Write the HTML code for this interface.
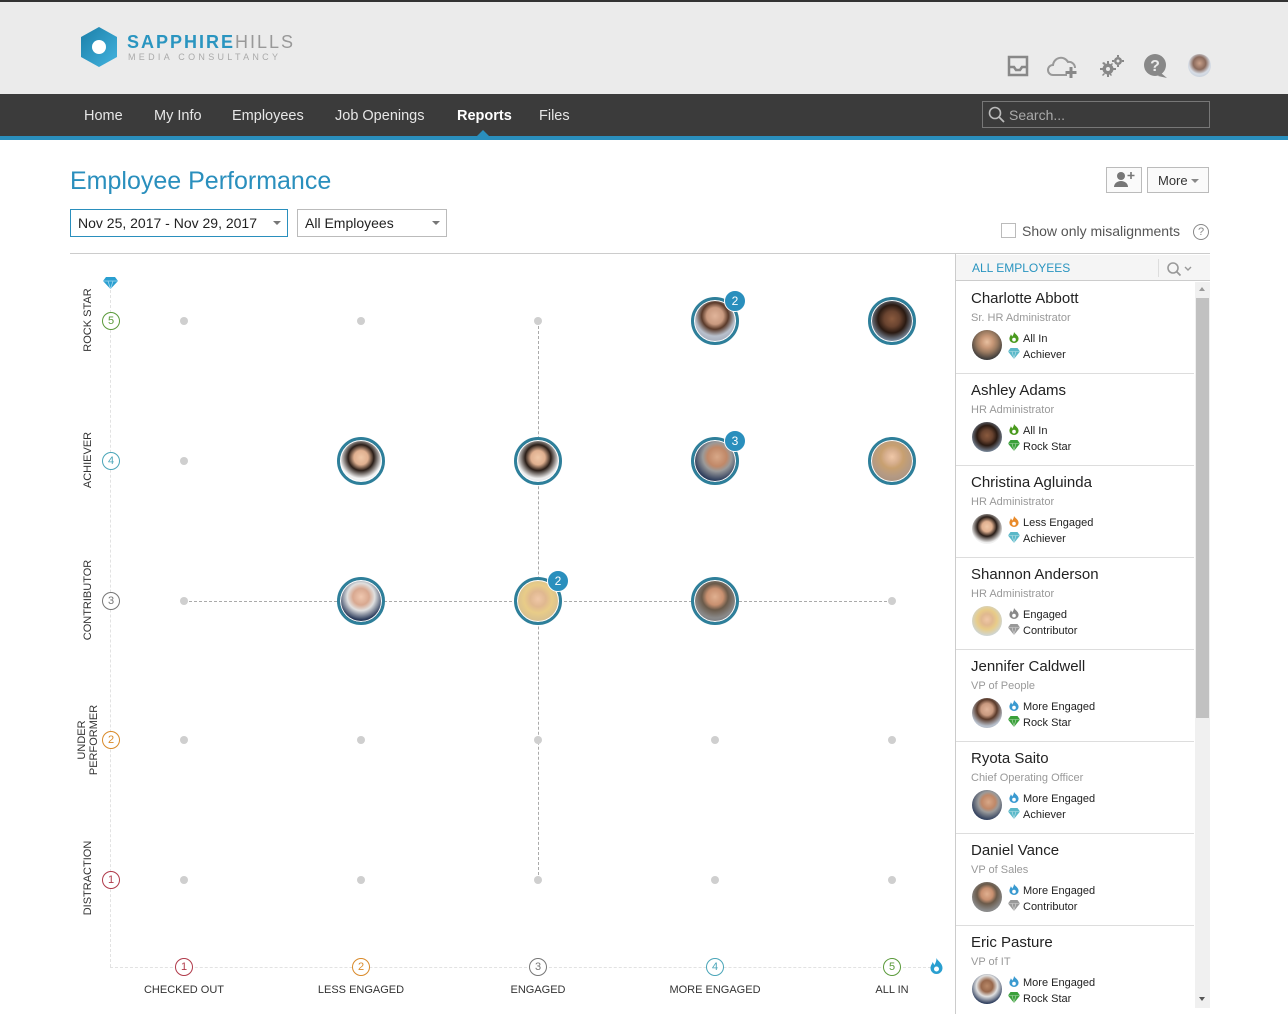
<!DOCTYPE html>
<html><head><meta charset="utf-8">
<style>
*{box-sizing:border-box;margin:0;padding:0}
body{width:1288px;height:1029px;overflow:hidden;background:#fff;font-family:"Liberation Sans",sans-serif;position:relative;color:#333}
.abs{position:absolute}
#top{left:0;top:0;width:1288px;height:94px;background:#ebebeb;border-top:2px solid #333}
#nav{left:0;top:94px;width:1288px;height:42px;background:#3b3b3b}
#stripe{left:0;top:136px;width:1288px;height:4px;background:#2a8fbd}
.nv{top:108px;color:#e6e6e6;font-size:14.5px}
.av{position:absolute;width:48px;height:48px;border-radius:50%;border:3px solid #2e7f9a;box-shadow:0 0 0 1px #fff inset}
.badge{position:absolute;width:22px;height:22px;border-radius:50%;background:#2a8fbd;color:#fff;font-size:12px;text-align:center;line-height:20px;border:1px solid #fff}
.dot{position:absolute;width:8px;height:8px;border-radius:50%;background:#cfcfcf}
.yc,.xc{position:absolute;width:18px;height:18px;border-radius:50%;border:1px solid;font-size:11px;text-align:center;line-height:16px;background:#fff}
.yl{position:absolute;font-size:11px;color:#333;transform:rotate(-90deg);transform-origin:center;white-space:nowrap;text-align:center;width:120px;line-height:12px}
.xl{position:absolute;font-size:11px;color:#333;width:160px;text-align:center;top:984px}
.it{position:absolute;left:956px;width:238px;height:92px;border-bottom:1px solid #ddd}
.it .n{position:absolute;left:15px;top:8px;font-size:15px;color:#222}
.it .t{position:absolute;left:15px;top:30px;font-size:11px;color:#999}
.it .p{position:absolute;left:16px;top:48px;width:30px;height:30px;border-radius:50%}
.it .a{position:absolute;left:52px;top:49px;font-size:11px;color:#222;line-height:16px}
.ic{display:inline-block;width:12px;height:11px;vertical-align:-1px;margin-right:3px}
</style></head><body>
<div id="top" class="abs"></div>
<svg class="abs" style="left:78px;top:26px" width="42" height="42" viewBox="0 0 42 42"><defs><linearGradient id="lg" x1="0" y1="0" x2="1" y2="1"><stop offset="0" stop-color="#1b7fa8"/><stop offset="1" stop-color="#43b3df"/></linearGradient></defs><polygon points="21,1 39,11 39,31 21,41 3,31 3,11" fill="url(#lg)"/><circle cx="21" cy="21" r="7" fill="#fff"/></svg>
<div class="abs" style="left:127px;top:32px;font-size:18px;letter-spacing:2px;font-weight:bold;color:#2a95c0">SAPPHIRE<span style="font-weight:normal;color:#999">HILLS</span></div>
<div class="abs" style="left:128px;top:52px;font-size:9px;letter-spacing:3.3px;color:#aaa">MEDIA CONSULTANCY</div>
<svg class="abs" style="left:1006px;top:55px" width="24" height="22" viewBox="0 0 24 22"><path d="M3 2h18v18H3z M3 12h5l2 3h4l2-3h5" fill="none" stroke="#888" stroke-width="2.5"/></svg>
<svg class="abs" style="left:1047px;top:53px" width="36" height="26" viewBox="0 0 36 26"><path d="M8 22H6a5 5 0 010-10 8 8 0 0115-3 6 6 0 017 6" fill="none" stroke="#999" stroke-width="2"/><path d="M24 14v11M18.5 19.5h11" stroke="#888" stroke-width="3"/><path d="M8 22h12" stroke="#999" stroke-width="2"/></svg>
<svg class="abs" style="left:1100px;top:54px" width="26" height="24" viewBox="0 0 26 24"><g fill="#888"><circle cx="8" cy="15" r="5.5"/><path d="M7 7h2v3H7zM7 20h2v3H7zM0 14h3v2H0zM13 14h3v2h-3zM2 9l2-1 2 2-2 1zM12 21l-1 1-2-2 1-1zM2 21l2-2 1 1-2 2zM12 9l1 1-2 2-1-1z"/><circle cx="18" cy="7" r="4"/><path d="M17 1h2v2h-2zM17 11h2v2h-2zM12 6h2v2h-2zM22 6h2v2h-2z"/></g><circle cx="8" cy="15" r="2" fill="#ebebeb"/><circle cx="18" cy="7" r="1.5" fill="#ebebeb"/></svg>
<svg class="abs" style="left:1143px;top:53px" width="26" height="26" viewBox="0 0 26 26"><circle cx="12" cy="12" r="11" fill="#888"/><path d="M18 20l6 5-9-2z" fill="#888"/><text x="12" y="18" font-size="16" font-weight="bold" fill="#ebebeb" text-anchor="middle" font-family="Liberation Sans">?</text></svg>
<div class="abs" style="left:1188px;top:54px;width:23px;height:23px;border-radius:50%;background:radial-gradient(circle at 50% 40%,#c9a08a 0,#8a6a5c 35%,#d7dde6 60%,#b8c4d0 100%)"></div>
<div id="nav" class="abs"></div>
<div id="stripe" class="abs"></div>
<div class="abs" style="left:477px;top:130px;width:0;height:0;border-left:6px solid transparent;border-right:6px solid transparent;border-bottom:6px solid #2a8fbd"></div>
<div class="abs nv" style="left:84px">Home</div>
<div class="abs nv" style="left:154px">My Info</div>
<div class="abs nv" style="left:232px">Employees</div>
<div class="abs nv" style="left:335px">Job Openings</div>
<div class="abs nv" style="left:457px;font-weight:bold;color:#fff">Reports</div>
<div class="abs nv" style="left:539px">Files</div>
<div class="abs" style="left:982px;top:101px;width:228px;height:27px;border:1px solid #777;background:#3b3b3b"></div>
<svg class="abs" style="left:988px;top:106px" width="18" height="18" viewBox="0 0 18 18"><circle cx="7" cy="7" r="5.5" fill="none" stroke="#bbb" stroke-width="1.6"/><path d="M11 11l5 5" stroke="#bbb" stroke-width="1.8"/></svg>
<div class="abs" style="left:1009px;top:107px;font-size:14px;color:#aaa">Search...</div>

<div class="abs" style="left:70px;top:167px;font-size:25px;color:#2a8fbd">Employee Performance</div>
<div class="abs" style="left:70px;top:209px;width:218px;height:28px;border:1px solid #2a8fbd;font-size:14px;padding:5px 7px;color:#222">Nov 25, 2017 - Nov 29, 2017</div>
<div class="abs" style="left:273px;top:221px;border-left:4px solid transparent;border-right:4px solid transparent;border-top:4px solid #777"></div>
<div class="abs" style="left:297px;top:209px;width:150px;height:28px;border:1px solid #bbb;font-size:14px;padding:5px 7px;color:#222">All Employees</div>
<div class="abs" style="left:432px;top:221px;border-left:4px solid transparent;border-right:4px solid transparent;border-top:4px solid #777"></div>

<div class="abs" style="left:1106px;top:167px;width:36px;height:26px;border:1px solid #bbb;background:#fafafa"></div>
<svg class="abs" style="left:1113px;top:170px" width="24" height="20" viewBox="0 0 24 20"><circle cx="8" cy="6" r="4" fill="#777"/><path d="M1 17a7 6 0 0114 0z" fill="#777"/><path d="M18 2v7M14.5 5.5h7" stroke="#777" stroke-width="1.6"/></svg>
<div class="abs" style="left:1147px;top:167px;width:62px;height:26px;border:1px solid #bbb;background:#fafafa;font-size:13px;padding:5px 10px;color:#333">More</div>
<div class="abs" style="left:1191px;top:179px;border-left:4px solid transparent;border-right:4px solid transparent;border-top:4px solid #888"></div>
<div class="abs" style="left:1001px;top:223px;width:15px;height:15px;border:1px solid #bbb;background:#fff"></div>
<div class="abs" style="left:1022px;top:223px;font-size:14px;color:#555">Show only misalignments</div>
<div class="abs" style="left:1193px;top:224px;width:16px;height:16px;border:1.4px solid #888;border-radius:50%;font-size:11px;text-align:center;line-height:14px;color:#888">?</div>

<div class="abs" style="left:70px;top:253px;width:1140px;height:1px;background:#ccc"></div>
<div class="abs" style="left:955px;top:254px;width:1px;height:760px;background:#ccc"></div>
<div class="abs" style="left:110px;top:290px;width:0;height:677px;border-left:1px dashed #e2e2e2"></div>
<div class="abs" style="left:110px;top:967px;width:826px;height:0;border-top:1px dashed #e2e2e2"></div>
<div class="abs" style="left:538px;top:321px;width:0;height:559px;border-left:1px dashed #aaa"></div>
<div class="abs" style="left:184px;top:601px;width:708px;height:0;border-top:1px dashed #aaa"></div>
<svg class="abs" style="left:103px;top:277px" width="15" height="12" viewBox="0 0 15 12"><path d="M3 0h9l3 4-7.5 8L0 4z" fill="#2a9fd0"/><path d="M0 4h15M5 4l2.5 8 2.5-8" stroke="#9fd6ee" stroke-width=".8" fill="none"/></svg>
<svg class="abs" style="left:929px;top:958px" width="15" height="16" viewBox="0 0 15 16"><path d="M7.5 0c1 3 6 5 6 10a6 6 0 01-12 0c0-3 2-4 2-6 1 1 1 2 2 3 1-2 2-4 2-7z" fill="#2a9fd0"/><circle cx="7.5" cy="11" r="2.5" fill="#fff"/></svg>

<div class="yc" style="left:102px;top:312px;border-color:#5a9a3a;color:#5a9a3a">5</div>
<div class="yc" style="left:102px;top:452px;border-color:#4aa5b8;color:#4aa5b8">4</div>
<div class="yc" style="left:102px;top:592px;border-color:#777;color:#777">3</div>
<div class="yc" style="left:102px;top:731px;border-color:#d98a2a;color:#d98a2a">2</div>
<div class="yc" style="left:102px;top:871px;border-color:#b03a4a;color:#b03a4a">1</div>
<div class="yl" style="left:28px;top:314px">ROCK STAR</div>
<div class="yl" style="left:28px;top:454px">ACHIEVER</div>
<div class="yl" style="left:28px;top:594px">CONTRIBUTOR</div>
<div class="yl" style="left:28px;top:728px">UNDER<br>PERFORMER</div>
<div class="yl" style="left:28px;top:872px">DISTRACTION</div>
<div class="xc" style="left:175px;top:958px;border-color:#b03a4a;color:#b03a4a">1</div>
<div class="xc" style="left:352px;top:958px;border-color:#d98a2a;color:#d98a2a">2</div>
<div class="xc" style="left:529px;top:958px;border-color:#777;color:#777">3</div>
<div class="xc" style="left:706px;top:958px;border-color:#4aa5b8;color:#4aa5b8">4</div>
<div class="xc" style="left:883px;top:958px;border-color:#5a9a3a;color:#5a9a3a">5</div>
<div class="xl" style="left:104px">CHECKED OUT</div>
<div class="xl" style="left:281px">LESS ENGAGED</div>
<div class="xl" style="left:458px">ENGAGED</div>
<div class="xl" style="left:635px">MORE ENGAGED</div>
<div class="xl" style="left:812px">ALL IN</div>

<div class="dot" style="left:180px;top:317px"></div><div class="dot" style="left:357px;top:317px"></div><div class="dot" style="left:534px;top:317px"></div>
<div class="dot" style="left:180px;top:457px"></div>
<div class="dot" style="left:180px;top:597px"></div><div class="dot" style="left:888px;top:597px"></div>
<div class="dot" style="left:180px;top:736px"></div><div class="dot" style="left:357px;top:736px"></div><div class="dot" style="left:534px;top:736px"></div><div class="dot" style="left:711px;top:736px"></div><div class="dot" style="left:888px;top:736px"></div>
<div class="dot" style="left:180px;top:876px"></div><div class="dot" style="left:357px;top:876px"></div><div class="dot" style="left:534px;top:876px"></div><div class="dot" style="left:711px;top:876px"></div><div class="dot" style="left:888px;top:876px"></div>

<div class="av" style="left:691px;top:297px;background:radial-gradient(circle at 50% 38%,#e0b49a 0,#c99a80 25%,#5a3a2a 40%,#b8c0cc 60%,#8c95a8 100%)"></div><div class="badge" style="left:724px;top:290px">2</div>
<div class="av" style="left:868px;top:297px;background:radial-gradient(circle at 50% 45%,#8a5a3e 0,#6a4430 25%,#2a1a12 45%,#8aa0b8 75%,#6a7a90 100%)"></div>
<div class="av" style="left:337px;top:437px;background:radial-gradient(circle at 50% 42%,#f0c8a8 0,#e0b090 22%,#2a1e18 40%,#f4f4f4 65%,#ddd 100%)"></div>
<div class="av" style="left:514px;top:437px;background:radial-gradient(circle at 50% 42%,#f0c8a8 0,#e0b090 22%,#2a1e18 40%,#f0f0f0 65%,#ccd 100%)"></div>
<div class="av" style="left:691px;top:437px;background:radial-gradient(circle at 55% 40%,#d8a888 0,#c08868 28%,#9a9a9a 42%,#2a3a5a 70%,#1a2030 100%)"></div><div class="badge" style="left:724px;top:430px">3</div>
<div class="av" style="left:868px;top:437px;background:radial-gradient(circle at 50% 40%,#f0c8a8 0,#d8b090 20%,#c8a070 35%,#b49a84 60%,#a08878 100%)"></div>
<div class="av" style="left:337px;top:577px;background:radial-gradient(circle at 50% 40%,#f0c8b0 0,#d8a890 25%,#e0e0e0 42%,#2a3a5a 70%,#1a2a48 100%)"></div>
<div class="av" style="left:514px;top:577px;background:radial-gradient(circle at 50% 45%,#f0c8a8 0,#e0b890 25%,#e8cc88 45%,#d8c090 70%,#c8d8e8 100%)"></div><div class="badge" style="left:547px;top:570px">2</div>
<div class="av" style="left:691px;top:577px;background:radial-gradient(circle at 50% 40%,#e0b090 0,#c89070 25%,#6a5a4a 40%,#8a8a8a 65%,#5a6070 100%)"></div>

<div class="abs" style="left:956px;top:255px;width:254px;height:26px;background:#f5f5f5;border-bottom:1px solid #ccc"></div>
<div class="abs" style="left:972px;top:261px;font-size:12px;color:#2a95c0">ALL EMPLOYEES</div>
<div class="abs" style="left:1158px;top:259px;width:1px;height:18px;background:#ddd"></div>
<svg class="abs" style="left:1166px;top:261px" width="30" height="16" viewBox="0 0 30 16"><circle cx="7" cy="7" r="5" fill="none" stroke="#999" stroke-width="1.6"/><path d="M10.5 10.5l4 4" stroke="#999" stroke-width="1.8"/><path d="M19 6l3 3 3-3" stroke="#999" stroke-width="1.4" fill="none"/></svg>
<div class="abs" style="left:1195px;top:282px;width:15px;height:726px;background:#f0f0f0"></div>
<div class="abs" style="left:1196px;top:298px;width:13px;height:420px;background:#c1c1c1"></div>
<div class="abs" style="left:1199px;top:287px;border-left:3px solid transparent;border-right:3px solid transparent;border-bottom:4px solid #999"></div>
<div class="abs" style="left:1199px;top:997px;border-left:3px solid transparent;border-right:3px solid transparent;border-top:4px solid #555"></div>

<svg width="0" height="0" style="position:absolute"><defs>
<symbol id="fire" viewBox="0 0 12 12"><path d="M6 0c1 2 5 4 5 7.5a5 4.5 0 01-10 0C1 5 2.5 4 2.5 2.5 3.5 3.5 3.5 4 4 5 5 3.5 6 2 6 0z"/><circle cx="6" cy="8.3" r="2" fill="#fff"/></symbol>
<symbol id="gem" viewBox="0 0 12 11"><path d="M2.5 0h7L12 3.5 6 11 0 3.5z"/><path d="M0 3.5h12M4 3.5l2 7 2-7" stroke="#fff" stroke-width=".6" fill="none" opacity=".6"/></symbol>
</defs></svg>

<div class="it" style="top:282px"><div class="n">Charlotte Abbott</div><div class="t">Sr. HR Administrator</div><div class="p" style="background:radial-gradient(circle at 50% 40%,#e8c0a0 0,#c89878 25%,#9a7a60 45%,#3a3a3a 75%)"></div><div class="a"><svg class="ic" fill="#4a9a1e"><use href="#fire"/></svg>All In<br><svg class="ic" fill="#5ab8c8"><use href="#gem"/></svg>Achiever</div></div>
<div class="it" style="top:374px"><div class="n">Ashley Adams</div><div class="t">HR Administrator</div><div class="p" style="background:radial-gradient(circle at 50% 45%,#8a5a3e 0,#6a4430 25%,#2a1a12 45%,#8aa0b8 80%)"></div><div class="a"><svg class="ic" fill="#4a9a1e"><use href="#fire"/></svg>All In<br><svg class="ic" fill="#3aa03a"><use href="#gem"/></svg>Rock Star</div></div>
<div class="it" style="top:466px"><div class="n">Christina Agluinda</div><div class="t">HR Administrator</div><div class="p" style="background:radial-gradient(circle at 50% 42%,#f0c8a8 0,#e0b090 22%,#2a1e18 42%,#f0f0f0 70%)"></div><div class="a"><svg class="ic" fill="#e88a2a"><use href="#fire"/></svg>Less Engaged<br><svg class="ic" fill="#5ab8c8"><use href="#gem"/></svg>Achiever</div></div>
<div class="it" style="top:558px"><div class="n">Shannon Anderson</div><div class="t">HR Administrator</div><div class="p" style="background:radial-gradient(circle at 50% 45%,#f0c8a8 0,#e0b890 25%,#e8cc88 45%,#c8d8e8 80%)"></div><div class="a"><svg class="ic" fill="#888"><use href="#fire"/></svg>Engaged<br><svg class="ic" fill="#999"><use href="#gem"/></svg>Contributor</div></div>
<div class="it" style="top:650px"><div class="n">Jennifer Caldwell</div><div class="t">VP of People</div><div class="p" style="background:radial-gradient(circle at 50% 38%,#e0b49a 0,#c99a80 25%,#5a3a2a 42%,#b8c0cc 70%)"></div><div class="a"><svg class="ic" fill="#3a9ad0"><use href="#fire"/></svg>More Engaged<br><svg class="ic" fill="#3aa03a"><use href="#gem"/></svg>Rock Star</div></div>
<div class="it" style="top:742px"><div class="n">Ryota Saito</div><div class="t">Chief Operating Officer</div><div class="p" style="background:radial-gradient(circle at 55% 40%,#d8a888 0,#c08868 28%,#9a9a9a 42%,#2a3a5a 75%)"></div><div class="a"><svg class="ic" fill="#3a9ad0"><use href="#fire"/></svg>More Engaged<br><svg class="ic" fill="#5ab8c8"><use href="#gem"/></svg>Achiever</div></div>
<div class="it" style="top:834px"><div class="n">Daniel Vance</div><div class="t">VP of Sales</div><div class="p" style="background:radial-gradient(circle at 50% 40%,#e0b090 0,#c89070 25%,#6a5a4a 42%,#8a8a8a 70%)"></div><div class="a"><svg class="ic" fill="#3a9ad0"><use href="#fire"/></svg>More Engaged<br><svg class="ic" fill="#999"><use href="#gem"/></svg>Contributor</div></div>
<div class="it" style="top:926px;border-bottom:none"><div class="n">Eric Pasture</div><div class="t">VP of IT</div><div class="p" style="background:radial-gradient(circle at 50% 40%,#b88868 0,#98684c 25%,#e0e0e0 45%,#2a3a5a 75%)"></div><div class="a"><svg class="ic" fill="#3a9ad0"><use href="#fire"/></svg>More Engaged<br><svg class="ic" fill="#3aa03a"><use href="#gem"/></svg>Rock Star</div></div>
</body></html>
